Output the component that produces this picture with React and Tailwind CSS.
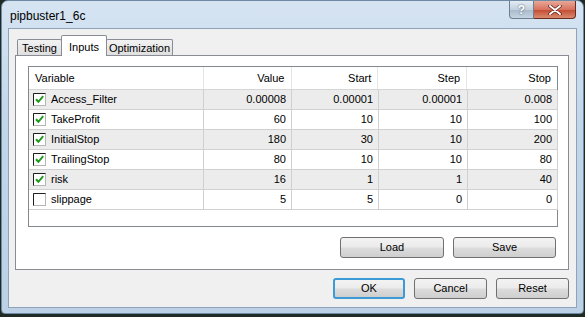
import React from 'react'

const rows = [
  { name: 'Access_Filter', checked: true, value: '0.00008', start: '0.00001', step: '0.00001', stop: '0.008' },
  { name: 'TakeProfit', checked: true, value: '60', start: '10', step: '10', stop: '100' },
  { name: 'InitialStop', checked: true, value: '180', start: '30', step: '10', stop: '200' },
  { name: 'TrailingStop', checked: true, value: '80', start: '10', step: '10', stop: '80' },
  { name: 'risk', checked: true, value: '16', start: '1', step: '1', stop: '40' },
  { name: 'slippage', checked: false, value: '5', start: '5', step: '0', stop: '0' },
]

function CheckBox({ checked }) {
  return (
    <svg width="13" height="13" viewBox="0 0 13 13" className="shrink-0">
      <rect x="0.5" y="0.5" width="12" height="12" fill="#ffffff" stroke="#b5b5b5" />
      <path d="M0.5 12.5 V0.5 H12.5" stroke="#1e1e1e" fill="none" />
      {checked && <path d="M3 6.2 L5.4 8.8 L10.2 3.2" stroke="#1f9a1f" strokeWidth="2" fill="none" />}
    </svg>
  )
}

function Button({ children, w, focus }) {
  return (
    <button
      className={
        'h-[21px] rounded-[3px] text-[11px] text-black bg-[linear-gradient(#f3f3f3_0%,#ebebeb_48%,#dcdcdc_52%,#cfcfcf_100%)] ' +
        (focus ? 'border-2 border-[#3c9ad6] ' : 'border border-[#707070] ') +
        w
      }
    >
      {children}
    </button>
  )
}

export default function App() {
  return (
    <div className="w-[585px] h-[317px] bg-[#1f2a24] overflow-hidden" style={{ fontFamily: '"Liberation Sans", Arial, sans-serif' }}>
      <div className="ml-[1px] w-[583px] h-[314px] rounded-t-[7px] rounded-b-[4px] border border-[#6f8aa5] bg-[linear-gradient(#d6e4f2,#c2d6ea_40%,#bcd1e6)] flex flex-col px-[6px] pb-[5px]">
        {/* title bar */}
        <div className="h-[27px] flex items-start justify-between shrink-0">
          <span className="pt-[6px] pl-[2px] text-[12px] text-black">pipbuster1_6c</span>
          <div className="flex mr-[1px]">
            <div className="w-[25px] h-[18px] rounded-bl-[4px] border border-t-0 border-[#6e7f93] bg-[linear-gradient(#e4ecf4,#c3d0dd_50%,#a9b9ca_51%,#c6d4e2)] flex items-center justify-center text-[12px] font-bold text-white [text-shadow:0_0_2px_#3b4a5b]">?</div>
            <div className="w-[42px] h-[18px] rounded-br-[4px] border border-t-0 border-l-0 border-[#6b2a20] bg-[linear-gradient(#e8a898,#d7735e_50%,#c24a30_51%,#d98b6e)] flex items-center justify-center">
              <svg width="14" height="10" viewBox="0 0 14 10">
                <path d="M2 1 L12 9 M12 1 L2 9" stroke="#5a1a10" strokeWidth="3.4" strokeLinecap="round" />
                <path d="M2 1 L12 9 M12 1 L2 9" stroke="#ffffff" strokeWidth="2" strokeLinecap="round" />
              </svg>
            </div>
          </div>
        </div>

        {/* client area */}
        <div className="flex-1 bg-[#f0f0f0] border border-[#8fa3b8] flex flex-col pl-[6px] pr-[7px] pt-[6px]">
          {/* tabs */}
          <div className="flex items-end pl-[2px] h-[21px] text-[11px] text-black">
            <div className="h-[17px] w-[45px] border border-b-0 border-[#898c95] rounded-t-[2px] bg-[linear-gradient(#f2f2f2,#dedede)] flex items-center justify-center">Testing</div>
            <div className="h-[21px] w-[46px] -mx-[1px] relative z-10 border border-b-0 border-[#898c95] rounded-t-[2px] bg-white flex items-start pt-[3px] justify-center">Inputs</div>
            <div className="h-[17px] w-[67px] border border-b-0 border-[#898c95] rounded-t-[2px] bg-[linear-gradient(#f2f2f2,#dedede)] flex items-center justify-center">Optimization</div>
          </div>

          {/* panel */}
          <div className="h-[215px] -mt-[1px] bg-white border border-[#898c95] flex flex-col pt-[10px] pl-[12px] pr-[10px]">
            <div className="h-[161px] border border-[#828790] bg-white text-[11px] text-black">
              <div className="flex h-[23px] border-b border-[#d5d5d5] items-center">
                <div className="w-[175px] h-full border-r border-[#e5e5e5] flex items-center pl-[6px]">Variable</div>
                <div className="w-[88px] h-full border-r border-[#e5e5e5] flex items-center justify-end pr-[6px]">Value</div>
                <div className="w-[87px] h-full border-r border-[#e5e5e5] flex items-center justify-end pr-[6px]">Start</div>
                <div className="w-[89px] h-full border-r border-[#e5e5e5] flex items-center justify-end pr-[6px]">Step</div>
                <div className="w-[90px] h-full flex items-center justify-end pr-[6px]">Stop</div>
              </div>
              {rows.map((r, i) => (
                <div key={r.name} className={'flex h-[20px] w-[529px] border-b border-[#d0d0d0] ' + (i % 2 === 0 ? 'bg-[#ececec]' : 'bg-white')}>
                  <div className="w-[175px] border-r border-[#d0d0d0] flex items-center gap-[5px] pl-[4px]">
                    <CheckBox checked={r.checked} />
                    <span>{r.name}</span>
                  </div>
                  <div className="w-[88px] border-r border-[#d0d0d0] flex items-center justify-end pr-[5px]">{r.value}</div>
                  <div className="w-[87px] border-r border-[#d0d0d0] flex items-center justify-end pr-[5px]">{r.start}</div>
                  <div className="w-[89px] border-r border-[#d0d0d0] flex items-center justify-end pr-[5px]">{r.step}</div>
                  <div className="w-[90px] border-r border-[#d0d0d0] flex items-center justify-end pr-[5px]">{r.stop}</div>
                </div>
              ))}
            </div>
            <div className="flex justify-end gap-[9px] mt-[10px] pr-[2px]">
              <Button w="w-[104px]">Load</Button>
              <Button w="w-[103px]">Save</Button>
            </div>
          </div>

          {/* bottom buttons */}
          <div className="flex justify-end gap-[9px] mt-[8px]">
            <Button w="w-[72px]" focus>OK</Button>
            <Button w="w-[73px]">Cancel</Button>
            <Button w="w-[73px]">Reset</Button>
          </div>
        </div>
      </div>
    </div>
  )
}
